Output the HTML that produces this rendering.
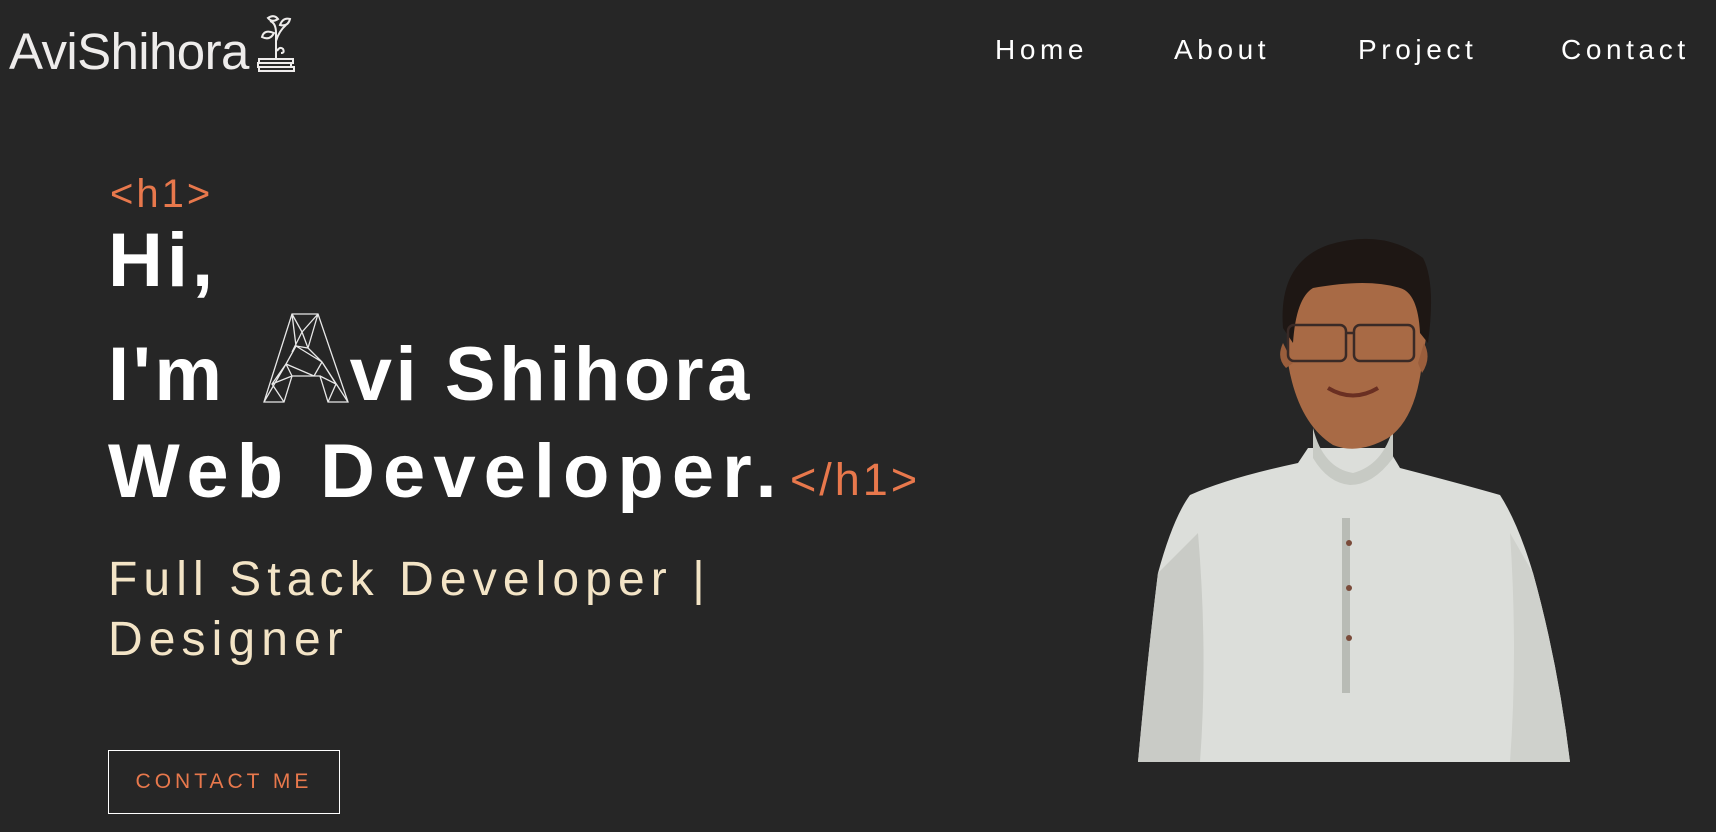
<!DOCTYPE html>
<html><head><meta charset="utf-8">
<style>
html,body{margin:0;padding:0;}
body{width:1716px;height:832px;background:#262626;position:relative;overflow:hidden;font-family:"Liberation Sans",sans-serif;}
.a{position:absolute;white-space:nowrap;}
.nav{font-size:28px;color:#fff;letter-spacing:4.6px;top:30px;line-height:40px;}
.h{font-weight:bold;color:#fff;font-size:76px;letter-spacing:3.6px;line-height:1;}
.or{color:#e8784c;}
.sub{color:#f3e4c6;font-size:48px;letter-spacing:6.1px;line-height:1;}
</style></head><body>

<div class="a" style="left:9px;top:22px;font-size:51px;color:#eeeceb;letter-spacing:-0.6px;line-height:60px;">AviShihora</div>
<svg class="a" style="left:256px;top:13px" width="42" height="60" viewBox="0 0 42 60" fill="none" stroke="#eeeceb" stroke-width="2">
 <path d="M20 45 V20 Q20 10 14 8 M20 28 Q23 18 30 12 M21 38 Q24 33 27 36 Q29 40 25 40"/>
 <path d="M6 24 Q8 16 18 20 Q14 28 6 24Z"/>
 <path d="M12 5 Q18 1 22 6 Q16 10 12 5Z"/>
 <path d="M24 12 Q27 4 34 6 Q32 14 24 12Z"/>
 <rect x="3" y="46" width="34" height="4"/><rect x="2" y="50" width="33" height="4"/><rect x="3" y="54" width="35" height="4"/>
</svg>

<div class="a nav" style="left:995px">Home</div>
<div class="a nav" style="left:1174px">About</div>
<div class="a nav" style="left:1358px">Project</div>
<div class="a nav" style="left:1561px">Contact</div>

<div class="a or" style="left:110px;top:172px;font-size:40px;letter-spacing:3px;line-height:44px;">&lt;h1&gt;</div>
<div class="a h" style="left:108px;top:223px;letter-spacing:4px;">Hi,</div>
<div class="a h" style="left:108px;top:337px;">I'm<span style="display:inline-block;width:124px"></span>vi Shihora</div>
<svg class="a" style="left:262px;top:312px" width="88" height="92" viewBox="0 0 88 92" fill="none" stroke="#e8e8e8" stroke-width="1.3">
 <path d="M30 2 H56 L86 90 H66 L58 64 H30 L22 90 H2 Z"/>
 <path d="M30 2 L40 20 L56 2 M40 20 L46 36 L34 34 L30 2 M46 36 L56 2 M46 36 L60 50 L52 64 M34 34 L24 52 L30 64 M24 52 L10 72 L22 90 M60 50 L74 72 L66 90 M10 72 L30 64 M74 72 L58 64 M34 34 L60 50 M24 52 L52 64 M2 90 L24 52 M86 90 L60 50 M40 20 L30 40"/>
</svg>
<div class="a h" style="left:108px;top:434px;letter-spacing:8px;">Web Developer.</div>
<div class="a or" style="left:790px;top:454px;font-size:45px;letter-spacing:3px;line-height:52px;">&lt;/h1&gt;</div>

<div class="a sub" style="left:108px;top:556px;">Full Stack Developer |</div>
<div class="a sub" style="left:108px;top:616px;">Designer</div>

<div class="a" style="left:108px;top:750px;width:232px;height:64px;border:1px solid #fff;box-sizing:border-box;color:#e8784c;font-size:21px;letter-spacing:4px;text-align:center;line-height:62px;">CONTACT ME</div>

<svg class="a" style="left:1138px;top:233px" width="432" height="529" viewBox="0 0 432 529">
 <path d="M52 262 Q90 245 160 230 L170 215 L250 215 L262 235 Q320 250 362 262 Q380 290 395 340 Q420 430 432 529 H0 Q10 420 20 340 Q35 285 52 262Z" fill="#dcdeda"/>
 <path d="M60 300 Q70 420 62 529 H0 Q10 420 20 340Z" fill="#c9cbc6"/>
 <path d="M372 300 Q380 420 372 529 H432 Q420 430 395 340Z" fill="#cfd1cc"/>
 <path d="M175 195 Q185 235 215 240 Q245 232 255 195 L255 225 Q235 252 212 252 Q190 250 175 225Z" fill="#c7cac4"/>
 <path d="M150 100 Q145 30 200 12 Q260 5 285 45 Q295 80 285 120 Q280 185 250 205 Q220 222 195 212 Q160 190 150 130Z" fill="#a86a45"/>
 <path d="M145 110 Q138 125 148 135 L155 130Z M286 110 Q294 125 284 140 L280 130Z" fill="#9a5e3c"/>
 <path d="M145 95 Q140 30 190 12 Q245 -5 285 25 Q298 50 290 110 L282 100 Q280 60 262 55 Q230 45 175 55 Q158 65 155 110Z" fill="#1e1714"/>
 <rect x="150" y="92" width="58" height="36" rx="6" fill="none" stroke="#3a2a26" stroke-width="2.5"/>
 <rect x="216" y="92" width="60" height="36" rx="6" fill="none" stroke="#3a2a26" stroke-width="2.5"/>
 <path d="M208 100 H216" stroke="#3a2a26" stroke-width="2.5"/>
 <path d="M190 155 Q215 170 240 155" stroke="#6a2f22" stroke-width="4" fill="none"/>
 <path d="M208 285 V460" stroke="#b8bbb5" stroke-width="8"/>
 <circle cx="211" cy="310" r="3" fill="#7a4b3a"/><circle cx="211" cy="355" r="3" fill="#7a4b3a"/><circle cx="211" cy="405" r="3" fill="#7a4b3a"/>
</svg>
</body></html>
